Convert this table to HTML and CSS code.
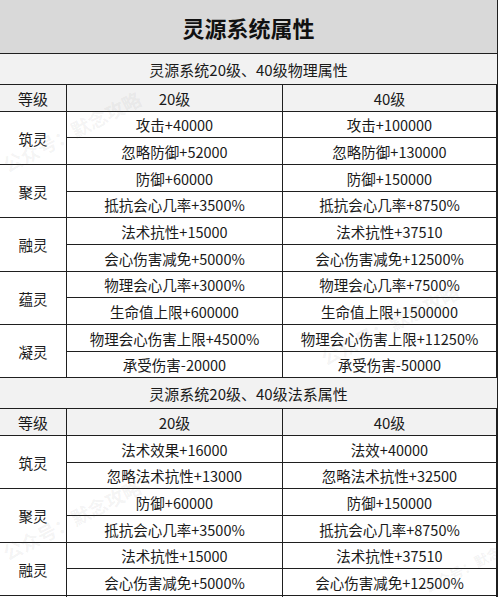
FILE: index.html
```html
<!DOCTYPE html>
<html lang="zh-CN">
<head>
<meta charset="utf-8">
<title>灵源系统属性</title>
<link rel="stylesheet" href="styles.css">
</head>
<body>
<div class="sheet">
  <div class="title">灵源系统属性</div>

  <div class="section">灵源系统20级、40级物理属性</div>
  <div class="grid">
    <div class="cell head">等级</div><div class="cell head">20级</div><div class="cell head">40级</div>
    <div class="cell name">筑灵</div><div class="cell">攻击+40000</div><div class="cell">攻击+100000</div>
    <div class="cell">忽略防御+52000</div><div class="cell">忽略防御+130000</div>
    <div class="cell name">聚灵</div><div class="cell">防御+60000</div><div class="cell">防御+150000</div>
    <div class="cell">抵抗会心几率+3500%</div><div class="cell">抵抗会心几率+8750%</div>
    <div class="cell name">融灵</div><div class="cell">法术抗性+15000</div><div class="cell">法术抗性+37510</div>
    <div class="cell">会心伤害减免+5000%</div><div class="cell">会心伤害减免+12500%</div>
    <div class="cell name">蕴灵</div><div class="cell">物理会心几率+3000%</div><div class="cell">物理会心几率+7500%</div>
    <div class="cell">生命值上限+600000</div><div class="cell">生命值上限+1500000</div>
    <div class="cell name">凝灵</div><div class="cell">物理会心伤害上限+4500%</div><div class="cell">物理会心伤害上限+11250%</div>
    <div class="cell">承受伤害-20000</div><div class="cell">承受伤害-50000</div>
  </div>

  <div class="section">灵源系统20级、40级法系属性</div>
  <div class="grid">
    <div class="cell head">等级</div><div class="cell head">20级</div><div class="cell head">40级</div>
    <div class="cell name">筑灵</div><div class="cell">法术效果+16000</div><div class="cell">法效+40000</div>
    <div class="cell">忽略法术抗性+13000</div><div class="cell">忽略法术抗性+32500</div>
    <div class="cell name">聚灵</div><div class="cell">防御+60000</div><div class="cell">防御+150000</div>
    <div class="cell">抵抗会心几率+3500%</div><div class="cell">抵抗会心几率+8750%</div>
    <div class="cell name">融灵</div><div class="cell">法术抗性+15000</div><div class="cell">法术抗性+37510</div>
    <div class="cell">会心伤害减免+5000%</div><div class="cell">会心伤害减免+12500%</div>
    <div class="cell name"></div><div class="cell"></div><div class="cell"></div>
  </div>

  <div class="mark mark-a">公众号：默念攻略</div>
  <div class="mark mark-b">公众号：默念攻略</div>
  <div class="mark mark-c">公众号：默念攻略</div>
  <div class="mark mark-d">公众号：默念</div>
</div>
</body>
</html>
```

FILE: styles.css
```css
html, body {
  margin: 0;
  padding: 0;
  background: #ffffff;
}

body {
  width: 500px;
  height: 597px;
  overflow: hidden;
  font-family: "Noto Sans CJK SC", "Noto Sans", sans-serif;
  color: #1a1a1a;
}

.sheet {
  position: relative;
  width: 498px;
  height: 597px;
  overflow: hidden;
  border-right: 1px solid #1f1f1f;
  box-sizing: border-box;
}

.title {
  height: 54px;
  box-sizing: border-box;
  border-bottom: 1px solid #1f1f1f;
  background: #d9d9d9;
  display: flex;
  align-items: center;
  justify-content: center;
  font-size: 22px;
  font-weight: 700;
  color: #111;
}

.section {
  height: 31px;
  box-sizing: border-box;
  border-bottom: 1px solid #1f1f1f;
  background: #f2f2f2;
  display: flex;
  align-items: center;
  justify-content: center;
  font-size: 15px;
  padding-top: 1px;
}

.grid {
  display: grid;
  grid-template-columns: 67px 216px 1fr;
  grid-auto-rows: 26.67px;
}

.cell {
  box-sizing: border-box;
  border-bottom: 1px solid #1f1f1f;
  border-right: 1px solid #1f1f1f;
  display: flex;
  align-items: center;
  justify-content: center;
  font-size: 14.5px;
  white-space: nowrap;
  background: #ffffff;
  padding-top: 1px;
}

.head {
  background: #f2f2f2;
  font-size: 15px;
}

.name {
  grid-row: span 2;
  grid-column: 1;
}

.mark {
  position: absolute;
  font-size: 19px;
  font-weight: 700;
  color: rgba(110, 110, 110, 0.08);
  transform: rotate(-27deg);
  transform-origin: left center;
  white-space: nowrap;
  pointer-events: none;
}

.mark-a { left: 4px; top: 152px; }
.mark-b { left: 322px; top: 345px; }
.mark-c { left: 4px; top: 540px; }
.mark-d { left: 425px; top: 578px; font-size: 14px; }
```
